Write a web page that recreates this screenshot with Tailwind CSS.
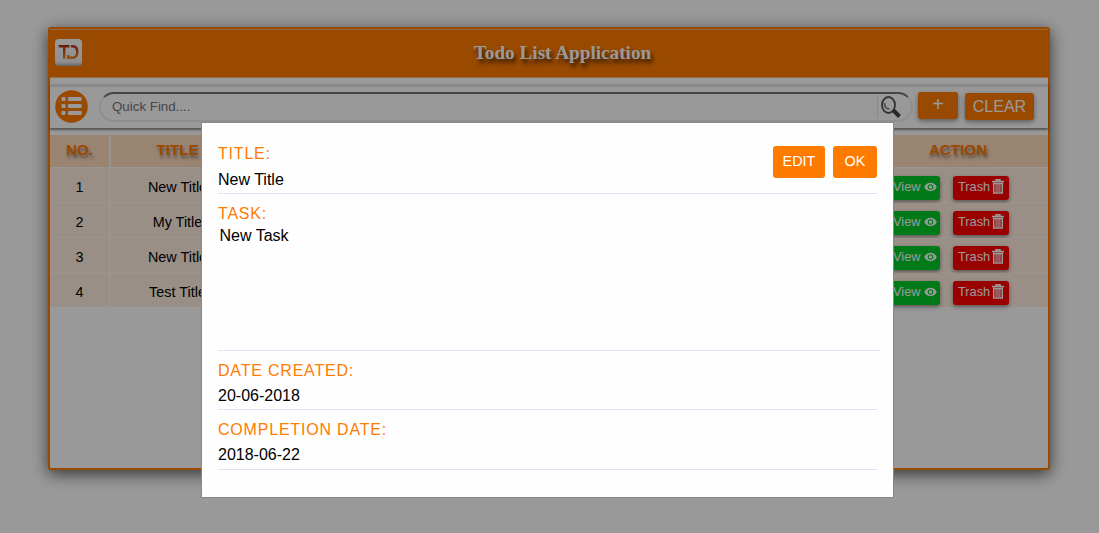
<!DOCTYPE html>
<html lang="en">
<head>
<meta charset="utf-8">
<title>Todo List Application</title>
<script src="https://cdn.jsdelivr.net/npm/@tailwindcss/browser@4"></script>
</head>
<body class="relative h-[533px] w-[1099px] overflow-hidden bg-white pl-12 pt-[27px] font-['Liberation_Sans',sans-serif] text-black">
<svg class="absolute h-0 w-0">
  <symbol id="eye" viewBox="0 0 14 10"><path fill="#fff" fill-rule="evenodd" d="M7 .5C3.800.5 1.300 2.400.3 5c1 2.600 3.500 4.500 6.700 4.500s5.700-1.900 6.700-4.500C12.700 2.400 10.200.5 7 .5ZM7 8a3 3 0 1 1 0-6 3 3 0 0 1 0 6Zm0-1.100a1.900 1.900 0 1 0 0-3.800 1.900 1.900 0 0 0 0 3.800Z"/></symbol>
  <symbol id="trash" viewBox="0 0 12 15"><path fill="none" stroke="#fff" stroke-width="1.500" d="M0 2.500h12M4 2V.8h4V2M1.700 3.500v10.400h8.600V3.500M1.700 4.500h8.600"/><path stroke="#fff" stroke-width="1.100" d="M4.100 5v8M6 5v8M7.900 5v8"/></symbol>
</svg>
<main class="h-[443px] w-[1002px] rounded-[3px] border-2 border-[#ff7b00] bg-white shadow-[0_4px_16px_rgba(0,0,0,0.65)]">
  <header class="flex h-[49px] items-center border-y border-[#ffb266] bg-[#ff7b00] pl-[5px]">
    <svg class="mb-[3px] h-[27px] w-[27px] shrink-0" viewBox="0 0 27 27">
      <defs>
        <linearGradient id="tile" x2="0" y2="1"><stop stop-color="#fff"/><stop offset=".85" stop-color="#f0f0f0"/><stop offset="1" stop-color="#aaa"/></linearGradient>
        <linearGradient id="mark" gradientUnits="userSpaceOnUse" x1="0" y1="6" x2="0" y2="20"><stop stop-color="#b62a10"/><stop offset="1" stop-color="#f08a12"/></linearGradient>
      </defs>
      <rect width="27" height="27" rx="4" fill="url(#tile)"/>
      <path fill="none" stroke="url(#mark)" stroke-width="2.400" d="M3.700 7.200H14.500M9.200 7v12.800M16 7.200h1.500c3 0 4.800 2.300 4.800 5.800s-1.800 5.800-4.800 5.800h-4.200v-2.600"/>
    </svg>
    <h1 class="-ml-[27px] mb-px w-full pl-[22px] text-center font-['Liberation_Serif',serif] text-[19.2px] font-bold text-white [text-shadow:2px_4px_4px_rgba(0,0,0,0.7)]">Todo List Application</h1>
  </header>
  <nav class="mt-[6px] flex h-[44px] items-start border-t-3 border-[#e5e5e5] shadow-[0_2px_2px_rgba(0,0,0,0.45)]">
    <svg class="ml-[5px] mt-[3px] h-[33px] w-[33px] shrink-0" viewBox="0 0 33 33"><circle cx="16.500" cy="16.500" r="16.300" fill="#ff7b00"/><g fill="#fff"><rect x="6.500" y="7" width="4" height="4" rx="1"/><rect x="6.500" y="14" width="4" height="4" rx="1"/><rect x="6.500" y="21" width="4" height="4" rx="1"/><rect x="13" y="7" width="13.700" height="4" rx="1"/><rect x="13" y="14" width="13.700" height="4" rx="1"/><rect x="13" y="21" width="13.700" height="4" rx="1"/></g></svg>
    <div class="ml-[11px] mt-[5px] flex h-[30px] w-[814px] shrink-0 items-center rounded-[15px] border-2 border-[#eee] border-t-[#767676] pl-[11px] text-[13.333px] text-[#757575]"><span class="mb-px flex-1">Quick Find....</span><svg class="h-6 w-[34px]" viewBox="0 0 34 24"><path d="M.5 1v22" stroke="#e5e5e5"/><ellipse cx="11.500" cy="10" rx="6.500" ry="8" fill="#fff" stroke="#555" stroke-width="1.800"/><path d="M7.500 8c0 4 2 6 5 6" fill="none" stroke="#777" stroke-width="1.500"/><path d="m16 15 6.500 6.500" stroke="#444" stroke-width="4"/></svg></div>
    <button class="ml-[5px] mt-[5px] h-[27px] w-10 shrink-0 rounded-[3px] bg-[#ff7b00] text-[20px] text-white shadow-[0_2px_5px_rgba(0,0,0,0.4)]"><span class="block h-[27px] leading-[24px]">+</span></button>
    <button class="ml-[7px] mt-[6px] h-[27px] w-[69px] shrink-0 rounded-[3px] bg-[#ff7b00] text-[16px] leading-[27px] text-white shadow-[0_2px_5px_rgba(0,0,0,0.4)]">CLEAR</button>
  </nav>
  <section class="mt-[7px] grid grid-cols-[59px_134px_619px_180px] grid-rows-[32px_repeat(4,34px)] gap-x-[2px] gap-y-[1px] bg-[#fff8f3] text-center text-[14.4px] leading-[38px] *:bg-[#ffeee1]">
    <div class="contents text-[15.2px] font-bold text-[#ff7b00] [text-shadow:1px_3px_3px_rgba(0,0,0,0.4)] *:bg-[#ffdcbf] *:leading-[30px]">
      <div>NO.</div><div class="pr-px">TITLE</div><div></div><div>ACTION</div>
    </div>
    <div>1</div><div class="pr-px">New Title</div><div></div>
    <div class="flex gap-[13px] pl-[19px] pt-[8px] text-[12.8px] leading-[21px] text-white"><button class="flex h-6 w-[53px] rounded-[3px] bg-[#00cb2a] pl-[6px] shadow-[0_2px_4px_rgba(0,0,0,0.4)]">View<svg class="ml-[3px] mt-[6px] h-[10px] w-[13px]"><use href="#eye"/></svg></button><button class="flex h-6 w-14 rounded-[3px] bg-[#ff0000] pl-[5px] shadow-[0_2px_4px_rgba(0,0,0,0.4)]">Trash<svg class="ml-[2px] mt-[3px] h-[15px] w-[12px]"><use href="#trash"/></svg></button></div>
    <div>2</div><div class="pr-px">My Title</div><div></div>
    <div class="flex gap-[13px] pl-[19px] pt-[8px] text-[12.8px] leading-[21px] text-white"><button class="flex h-6 w-[53px] rounded-[3px] bg-[#00cb2a] pl-[6px] shadow-[0_2px_4px_rgba(0,0,0,0.4)]">View<svg class="ml-[3px] mt-[6px] h-[10px] w-[13px]"><use href="#eye"/></svg></button><button class="flex h-6 w-14 rounded-[3px] bg-[#ff0000] pl-[5px] shadow-[0_2px_4px_rgba(0,0,0,0.4)]">Trash<svg class="ml-[2px] mt-[3px] h-[15px] w-[12px]"><use href="#trash"/></svg></button></div>
    <div>3</div><div class="pr-px">New Title</div><div></div>
    <div class="flex gap-[13px] pl-[19px] pt-[8px] text-[12.8px] leading-[21px] text-white"><button class="flex h-6 w-[53px] rounded-[3px] bg-[#00cb2a] pl-[6px] shadow-[0_2px_4px_rgba(0,0,0,0.4)]">View<svg class="ml-[3px] mt-[6px] h-[10px] w-[13px]"><use href="#eye"/></svg></button><button class="flex h-6 w-14 rounded-[3px] bg-[#ff0000] pl-[5px] shadow-[0_2px_4px_rgba(0,0,0,0.4)]">Trash<svg class="ml-[2px] mt-[3px] h-[15px] w-[12px]"><use href="#trash"/></svg></button></div>
    <div>4</div><div class="pr-px">Test Title</div><div></div>
    <div class="flex gap-[13px] pl-[19px] pt-[8px] text-[12.8px] leading-[21px] text-white"><button class="flex h-6 w-[53px] rounded-[3px] bg-[#00cb2a] pl-[6px] shadow-[0_2px_4px_rgba(0,0,0,0.4)]">View<svg class="ml-[3px] mt-[6px] h-[10px] w-[13px]"><use href="#eye"/></svg></button><button class="flex h-6 w-14 rounded-[3px] bg-[#ff0000] pl-[5px] shadow-[0_2px_4px_rgba(0,0,0,0.4)]">Trash<svg class="ml-[2px] mt-[3px] h-[15px] w-[12px]"><use href="#trash"/></svg></button></div>
  </section>
</main>
<div class="absolute inset-0 bg-black/40"></div>
<div class="absolute left-[201px] top-[122px] flex h-[376px] w-[693px] flex-col border border-[#888] bg-[#fefefe] pl-4 pt-[22px] text-[16px] leading-[18px]">
  <div class="flex h-[49px] w-[659px] border-b border-[#e0dff7]">
    <div class="flex-1">
      <div class="tracking-[0.8px] text-[#ff7b00]">TITLE:</div>
      <div class="mt-2">New Title</div>
    </div>
    <button class="mt-[1px] h-8 w-[52px] rounded-[3px] bg-[#ff7b00] text-[14.4px] text-white"><span class="block h-5">EDIT</span></button>
    <button class="ml-2 mt-[1px] h-8 w-11 rounded-[3px] bg-[#ff7b00] text-[14.4px] text-white"><span class="block h-5">OK</span></button>
  </div>
  <div class="mt-[11px] h-[146px] w-[662px] border-b border-[#e0dff7]">
    <div class="tracking-[0.8px] text-[#ff7b00]">TASK:</div>
    <div class="mt-1 pl-[1.500px]">New Task</div>
  </div>
  <div class="mt-[11px] h-12 w-[659px] border-b border-[#e0dff7]">
    <div class="tracking-[0.8px] text-[#ff7b00]">DATE CREATED:</div>
    <div class="mt-[7px]">20-06-2018</div>
  </div>
  <div class="mt-[11px] h-[49px] w-[659px] border-b border-[#e0dff7]">
    <div class="tracking-[0.8px] text-[#ff7b00]">COMPLETION DATE:</div>
    <div class="mt-[7px]">2018-06-22</div>
  </div>
</div>
</body>
</html>
